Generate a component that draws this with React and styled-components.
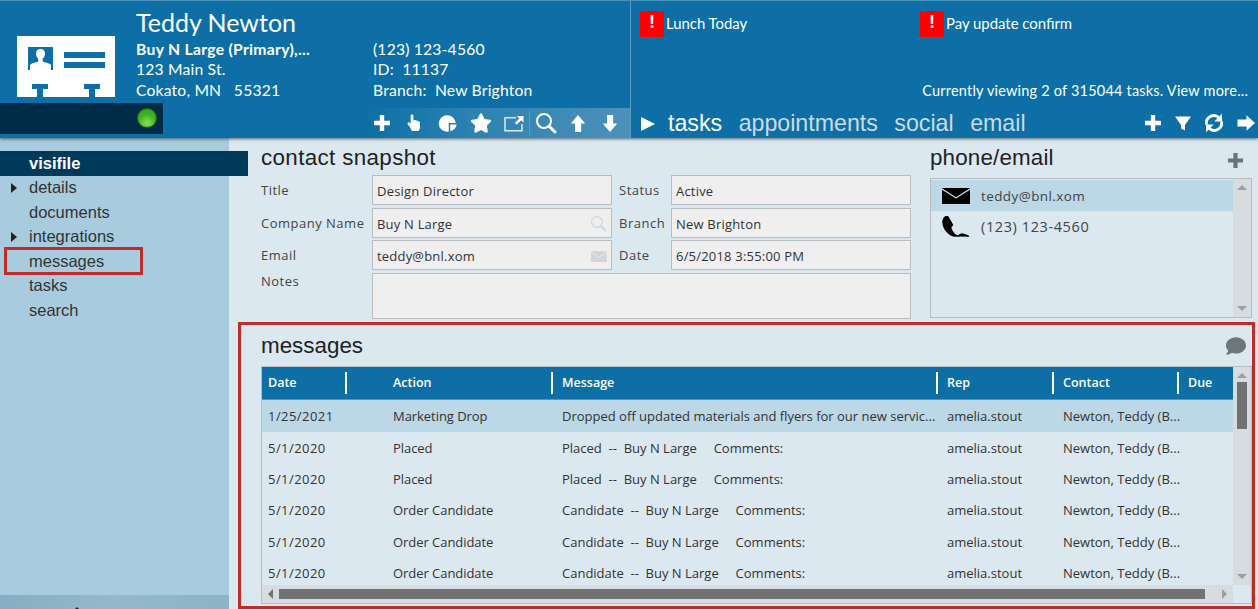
import React from 'react';
import styled, { createGlobalStyle } from 'styled-components';
import { FaStar, FaComment } from 'react-icons/fa';

const Global = createGlobalStyle`
  html, body { margin: 0; padding: 0; width: 1258px; height: 609px; overflow: hidden; background: #dbe8f0; }
  body { font-family: "Open Sans", "Liberation Sans", sans-serif; font-size: 13px; color: #333; }
  * { box-sizing: border-box; }
`;

const Page = styled.div`display: flex; flex-direction: column; width: 1258px; height: 609px; overflow: hidden;`;
const Header = styled.header`
  display: flex; height: 138px; flex: none; background: #0d6fa5; border-top: 1px solid #4a93bd;
  box-shadow: 0 1px 3px rgba(40,60,70,.75); color: #fff; position: relative; z-index: 3;
`;
const ContactHead = styled.div`display: flex; flex-direction: column; width: 631px; flex: none; border-right: 1px solid #5c9cc2;`;
const ContactTop = styled.div`display: flex; height: 102px; flex: none;`;
const LogoCell = styled.div`width: 136px; flex: none; padding: 35px 0 0 17px;`;
const ContactInfo = styled.div`flex: 1; padding-top: 6px;`;
const Name = styled.div`font-family: "Lato", sans-serif; font-size: 25px; line-height: 31px; height: 31.5px; color: #fff;`;
const InfoGrid = styled.div`display: grid; grid-template-columns: 237px 1fr; grid-auto-rows: 20.7px; font-size: 15.7px; line-height: 20.7px; font-family: "Lato", sans-serif; letter-spacing: .18px;`;
const Strong = styled.span`font-weight: 700; letter-spacing: .3px;`;
const ContactBottom = styled.div`display: flex; justify-content: space-between; align-items: flex-end; height: 35px; flex: none;`;
const StatusBar = styled.div`width: 163px; height: 31px; align-self: flex-start; background: #002c47; padding: 5px 0 0 137px;`;
const Led = styled.span`
  display: block; width: 20px; height: 20px; border-radius: 50%;
  background: radial-gradient(circle at 50% 78%, #8be05c 0, #3fb522 50%, #2e9a18 100%);
  border: 1px solid #1d6a12;
`;
const ContactTools = styled.div`
  display: flex; align-items: center; width: 265px; height: 30px;
  background: linear-gradient(90deg, #0d6fa5 0, #2c82b1 40%, #4d91b9 100%);
`;
const ToolSlot = styled.span`display: flex; width: ${p => p.$w || 32}px; height: 24px; align-items: center; justify-content: center; flex: none;`;
const ToolDivider = styled.span`width: 1px; height: 24px; margin-left: -1px; background: #5c9cc2; flex: none;`;

const TaskHead = styled.div`flex: 1; display: flex; flex-direction: column; padding-left: 9px; min-width: 0;`;
const Alerts = styled.div`display: flex; padding-top: 10px; height: 80px; flex: none;`;
const Alert = styled.div`display: flex; width: 280px; height: 26px; align-items: flex-start; gap: 2px; font-family: "Lato", sans-serif; font-size: 14.9px; line-height: 25px;`;
const Bang = styled.span`display: flex; width: 24px; height: 26px; background: #f00; color: #fff; font: 700 18px/22px "Liberation Sans", sans-serif; align-items: flex-start; justify-content: center; flex: none;`;
const Viewing = styled.div`height: 22px; padding-right: 10px; text-align: right; font-family: "Lato", sans-serif; font-size: 14.5px; line-height: 20px; letter-spacing: .2px;`;
const TabRow = styled.div`display: flex; align-items: center; height: 36px; flex: none; padding-top: 6px;`;
const TabArrow = styled.svg`width: 14px; height: 16px; flex: none; margin: 1px 13px 0 1px;`;
const Tab = styled.span`
  font-family: "Liberation Sans", sans-serif; font-size: 23.2px; margin-right: 16.500px;
  color: ${p => (p.$active ? '#fff' : '#cbdae3')};
`;
const TaskTools = styled.div`display: flex; margin-left: auto; align-items: center; gap: 13px; padding-right: 3px;`;
const TaskTool = styled.span`display: flex; align-items: center; justify-content: center;`;

const Body = styled.div`display: flex; flex: 1; min-height: 0;`;
const Sidebar = styled.nav`
  width: 229px; flex: none; display: flex; flex-direction: column; padding-top: 13px;
  background: #a8cbde; position: relative; z-index: 2;
`;
const NavItem = styled.div`
  display: flex; align-items: center; height: 24.5px; flex: none; padding-left: 29px;
  font-family: "Liberation Sans", sans-serif; font-size: 16.5px; color: #333; position: relative;
  ${p => p.$active && 'width: 248px; background: #003a5b; color: #fff; font-weight: 700;'}
  ${p => p.$boxed && 'width: 139px; height: 28px; margin: -2px 0 -1.5px 4px; border: 3px solid #c02b2b; padding-left: 22px;'}
`;
const Caret = styled.span`
  position: absolute; left: 11px; top: 7px; width: 0; height: 0;
  border-left: 6px solid #222; border-top: 5px solid transparent; border-bottom: 5px solid transparent;
`;
const SidebarFoot = styled.div`margin-top: auto; height: 14px; position: relative; background: linear-gradient(100deg, #86adc3, #94b9cd 50%, #8cb3c8);`;
const FootPeek = styled.span`
  position: absolute; left: 75px; bottom: 0; width: 0; height: 0;
  border-left: 2.500px solid transparent; border-right: 2.500px solid transparent; border-bottom: 2px solid #223;
`;

const Content = styled.main`flex: 1; display: flex; flex-direction: column; min-width: 0;`;
const Snapshot = styled.div`display: flex; height: 184px; flex: none; padding: 8px 6px 0 32px; gap: 19px;`;
const SnapshotMain = styled.section`width: 650px; flex: none;`;
const Heading = styled.h2`
  margin: 0; font: 400 22.4px/24px "Liberation Sans", sans-serif; color: #222; height: 24px;
  letter-spacing: ${p => p.$track || 0}px;
`;
const FormGrid = styled.div`
  display: grid; grid-template-columns: 111px 240px 59px 240px; grid-template-rows: 30px 30px 30px 46px;
  gap: 2.670px 0; margin-top: 5px;
`;
const Label = styled.label`
  font-size: 13px; color: #444; padding-top: 6px; letter-spacing: .5px; white-space: nowrap;
  ${p => p.$pad && 'padding-left: 7px;'}
  ${p => p.$raised && 'margin-top: -7px;'}
`;
const Field = styled.div`
  display: flex; align-items: center; justify-content: space-between; background: #efefef; border: 1px solid #b9bdc0;
  padding: 2px 4px 0; font-size: 13px; color: #333; letter-spacing: .2px; ${p => p.$wide && 'grid-column: span 3;'}
`;

const PhonePanel = styled.section`flex: 1; min-width: 0;`;
const HeadingRow = styled.div`display: flex; justify-content: space-between; align-items: center; height: 24px; padding-right: 8px;`;
const AddIcon = styled.span`display: flex; margin-top: 5px;`;
const PhoneList = styled.div`display: flex; height: 140px; margin-top: 8px; border: 1px solid #b9bdc0; background: #dbe8f0;`;
const PhoneRows = styled.div`flex: 1; padding-top: 1px;`;
const PhoneRow = styled.div`
  display: flex; align-items: center; height: 31px; gap: 11px; padding-left: 11px; color: #444;
  font-size: ${p => (p.$selected ? '13.5px' : '14.5px')};
  letter-spacing: ${p => (p.$selected ? '.4px' : '.6px')};
  ${p => p.$selected && 'background: #bcd7e6;'}
`;
const VScroll = styled.div`
  width: 18px; flex: none; background: #d6dce0; display: flex; flex-direction: column; align-items: center; justify-content: space-between; padding: 6px 0 6px;
`;
const UpTri = styled.span`width: 0; height: 0; border-left: 5px solid transparent; border-right: 5px solid transparent; border-bottom: 5px solid #9a9fa3;`;
const DownTri = styled.span`width: 0; height: 0; border-left: 5px solid transparent; border-right: 5px solid transparent; border-top: 5px solid #9a9fa3;`;

const Messages = styled.section`
  height: 287px; flex: none; margin: 0 3px 0 9px; border: 3px solid #c02b2b; padding: 9px 0 0 20px;
  display: flex; flex-direction: column;
`;
const MessagesHead = styled.div`display: flex; justify-content: space-between; align-items: center; height: 24px; padding-right: 6px; flex: none;`;
const Grid = styled.div`
  margin-top: 8px; display: grid; grid-template-columns: 1fr 18px; grid-template-rows: 1fr 18px;
  flex: 1; min-height: 0; border: 1px solid #b9bdc0; margin-bottom: 2px;
`;
const TableWrap = styled.div`min-width: 0; min-height: 0; overflow: hidden;`;
const cols = '83px 38px 168px 385px 116px 125px 57px';
const HeaderRow = styled.div`
  display: grid; grid-template-columns: ${cols}; height: 33px; background: #0d6fa5; border-bottom: 1px solid #5b93b5; align-items: center; color: #fff;
`;
const HeadCell = styled.div`
  font-weight: 600; font-size: 12.500px; height: 22px; line-height: 22px; padding-left: ${p => (p.$first ? '6px' : p.$sep ? '9px' : '10px')};
  ${p => p.$sep && 'border-left: 2px solid #fff;'}
`;
const Row = styled.div`
  display: grid; grid-template-columns: ${cols}; height: ${p => (p.$selected ? '32px' : '31.3px')}; align-items: center; font-size: 13px; color: #333;
  ${p => p.$selected && 'background: #bcd7e6;'}
`;
const DateCell = styled.div`padding-left: 6px; white-space: nowrap; letter-spacing: .45px;`;
const ActionCell = styled.div`padding-left: 10px; white-space: nowrap; letter-spacing: -.05px;`;
const Cell = styled.div`padding-left: 11px; white-space: nowrap;`;
const Spacer = styled.div``;
const Thumb = styled.div`width: 10px; height: 47px; margin-top: 4px; margin-bottom: auto; background: #707274;`;
const HScroll = styled.div`display: flex; align-items: center; background: #d6dce0; padding: 0 6px; gap: 6px;`;
const LeftTri = styled.span`width: 0; height: 0; border-top: 5px solid transparent; border-bottom: 5px solid transparent; border-right: 5px solid #707274;`;
const RightTri = styled.span`width: 0; height: 0; border-top: 5px solid transparent; border-bottom: 5px solid transparent; border-left: 5px solid #9a9fa3;`;
const HThumb = styled.div`flex: 1; height: 10px; background: #707274; margin-right: 11px;`;
const Corner = styled.div`background: #dbe8f0;`;

const Plus = ({ size = 18, color = '#fff' }) => (
  <svg width={size} height={size} viewBox="0 0 18 18"><path fill={color} d="M6.800 1h4.400v5.800H17v4.400h-5.800V17H6.800v-5.800H1V6.800h5.800z" /></svg>
);
const Hand = () => (
  <svg width="15" height="18" viewBox="0 0 15 18"><path fill="#fff" d="M5 .5c.9 0 1.400.6 1.400 1.400v4.400l1.200-.2 1.300.2 1.300.4 1.500.6c1 .5 1.300 1 1.300 2v4.400l-1.200 3.300H4.800L3.600 14 .9 10.500c-.7-1-.4-1.700.3-2 .7-.4 1.400 0 2 .7l.5.5V1.900C3.700 1.100 4.200.5 5 .5z" /></svg>
);
const Pie = () => (
  <svg width="19" height="19" viewBox="0 0 18 18"><path fill="#fff" d="M8.500 1.200a7.800 7.800 0 0 0 0 15.600c.8 0 1.600-.1 1.700-.4V8.600h6.600C16.300 4.500 12.800 1.200 8.500 1.200z" /><path fill="#fff" d="M11.600 10h6c-.3 3-2.600 5.600-6 6.400z" /></svg>
);
const Launch = () => (
  <svg width="20" height="17" viewBox="0 0 20 17" fill="none"><path stroke="#dbe9f2" strokeWidth="1.500" d="M12 2.800H1v13h17V9" /><path fill="#fff" d="M13 1h6.500v6.500L17.200 5.200l-4.600 4.600-1.800-1.800 4.600-4.600z" /></svg>
);
const Lens = ({ size = 22, color = '#fff', w = 2 }) => (
  <svg width={size} height={size} viewBox="0 0 22 22" fill="none"><circle cx="9" cy="9" r="7" stroke={color} strokeWidth={w} /><path stroke={color} strokeWidth={w + 1} strokeLinecap="round" d="M14.200 14.200l5.800 5.800" /></svg>
);
const Up = () => (
  <svg width="16" height="19" viewBox="0 0 14 18"><path fill="#fff" d="M7 1l6.800 8H10v8H4.200V9H.2z" /></svg>
);
const Down = () => (
  <svg width="16" height="19" viewBox="0 0 14 18"><path fill="#fff" d="M7 17l6.800-8H10V1H4.200v8H.2z" /></svg>
);
const Funnel = () => (
  <svg width="16" height="15" viewBox="0 0 16 15"><path fill="#fff" d="M0 .5h16L10 9v5.500l-4-2V9z" /></svg>
);
const Refresh = () => (
  <svg width="20" height="20" viewBox="0 0 20 20" fill="none"><path stroke="#fff" strokeWidth="2.800" d="M2.500 11.500a7.500 7.500 0 0 1 12.500-6.800" /><path stroke="#fff" strokeWidth="2.800" d="M17.500 8.500a7.500 7.500 0 0 1-12.500 6.800" /><path fill="#fff" d="M18 .8v7.700h-7.700zM2 19.200v-7.700h7.700z" /></svg>
);
const Next = () => (
  <svg width="18" height="16" viewBox="0 0 18 16"><path fill="#fff" d="M18 8L9.500.3v4.200H.5v7h9v4.200z" /></svg>
);
const Mail = ({ size = 28, h = 16, fill = '#000', line = '#dbe8f0' }) => (
  <svg width={size} height={h} viewBox="0 0 28 17" preserveAspectRatio="none"><rect width="28" height="17" fill={fill} /><path fill="none" stroke={line} strokeWidth="1.300" d="M0 1l14 9.500L28 1" /></svg>
);
const Phone = () => (
  <svg width="28" height="21" viewBox="0 0 28 21"><path fill="#000" d="M3.500 0C1.500 1 .3 3 .3 6c0 4 2 9 7.500 13 3 2 7 2 11 1.500l8.500.3c0-1-1-1.800-2.500-2-2-1-3.500-1-5-1.500-1.500.5-2.500 1-3.500 2-2.500 0-5.500-3-7-7.500l2-3C10 7 8 2.500 6.500.5 5.500-.2 4.500-.3 3.500 0z" /></svg>
);
const Logo = () => (
  <svg width="98" height="61" viewBox="0 0 98 61">
    <rect width="98" height="61" fill="#fff" />
    <path fill="#0d6fa5" d="M15 48h16v5h-5v8h-6v-8h-5zM67 48h16v5h-5v8h-6v-8h-5z" />
    <rect x="11" y="11" width="25" height="23" fill="#0d6fa5" />
    <path fill="#fff" d="M23.500 13c3 0 4.500 2 4.500 4.500 0 2.300-1 4.300-2.300 5.300v2.700c2.300 1.200 6.800 1.500 8.300 3.500v5H13v-5c1.500-2 6-2.300 8.300-3.500v-2.700c-1.300-1-2.300-3-2.300-5.300 0-2.500 1.500-4.500 4.500-4.500z" />
    <rect x="47" y="16" width="41" height="6" fill="#0d6fa5" />
    <rect x="47" y="26" width="41" height="6" fill="#0d6fa5" />
  </svg>
);

const rows = [
  ['1/25/2021', 'Marketing Drop', 'Dropped off updated materials and flyers for our new servic...', true],
  ['5/1/2020', 'Placed', 'Placed  --  Buy N Large     Comments:'],
  ['5/1/2020', 'Placed', 'Placed  --  Buy N Large     Comments:'],
  ['5/1/2020', 'Order Candidate', 'Candidate  --  Buy N Large     Comments:'],
  ['5/1/2020', 'Order Candidate', 'Candidate  --  Buy N Large     Comments:'],
  ['5/1/2020', 'Order Candidate', 'Candidate  --  Buy N Large     Comments:'],
];
const Pre = styled.span`white-space: pre;`;

export default function App() {
  return (
    <Page>
      <Global />
      <Header>
        <ContactHead>
          <ContactTop>
            <LogoCell><Logo /></LogoCell>
            <ContactInfo>
              <Name>Teddy Newton</Name>
              <InfoGrid>
                <Strong>Buy N Large (Primary),...</Strong><span>(123) 123-4560</span>
                <span>123 Main St.</span><Pre>ID:  11137</Pre>
                <Pre>Cokato, MN   55321</Pre><Pre>Branch:  New Brighton</Pre>
              </InfoGrid>
            </ContactInfo>
          </ContactTop>
          <ContactBottom>
            <StatusBar><Led /></StatusBar>
            <ContactTools>
              <ToolSlot $w={33}><Plus /></ToolSlot>
              <ToolSlot $w={33}><Hand /></ToolSlot>
              <ToolSlot $w={33}><Pie /></ToolSlot>
              <ToolSlot $w={33}><FaStar size={22} color="#fff" /></ToolSlot>
              <ToolSlot $w={33}><Launch /></ToolSlot>
              <ToolDivider />
              <ToolSlot><Lens /></ToolSlot>
              <ToolSlot><Up /></ToolSlot>
              <ToolSlot><Down /></ToolSlot>
            </ContactTools>
          </ContactBottom>
        </ContactHead>
        <TaskHead>
          <Alerts>
            <Alert><Bang>!</Bang>Lunch Today</Alert>
            <Alert><Bang>!</Bang>Pay update confirm</Alert>
          </Alerts>
          <Viewing>Currently viewing 2 of 315044 tasks. View more...</Viewing>
          <TabRow>
            <TabArrow viewBox="0 0 14 16"><path fill="#fff" d="M0 1l14 7-14 7z" /></TabArrow>
            <Tab $active>tasks</Tab>
            <Tab>appointments</Tab>
            <Tab>social</Tab>
            <Tab>email</Tab>
            <TaskTools>
              <TaskTool><Plus /></TaskTool>
              <TaskTool><Funnel /></TaskTool>
              <TaskTool><Refresh /></TaskTool>
              <TaskTool><Next /></TaskTool>
            </TaskTools>
          </TabRow>
        </TaskHead>
      </Header>
      <Body>
        <Sidebar>
          <NavItem $active>visifile</NavItem>
          <NavItem><Caret />details</NavItem>
          <NavItem>documents</NavItem>
          <NavItem><Caret />integrations</NavItem>
          <NavItem $boxed>messages</NavItem>
          <NavItem>tasks</NavItem>
          <NavItem>search</NavItem>
          <SidebarFoot><FootPeek /></SidebarFoot>
        </Sidebar>
        <Content>
          <Snapshot>
            <SnapshotMain>
              <Heading $track={0.35}>contact snapshot</Heading>
              <FormGrid>
                <Label>Title</Label><Field>Design Director</Field>
                <Label $pad>Status</Label><Field>Active</Field>
                <Label>Company Name</Label><Field>Buy N Large<Lens size={17} color="#d3d6d8" w={1.5} /></Field>
                <Label $pad>Branch</Label><Field>New Brighton</Field>
                <Label>Email</Label><Field>teddy@bnl.xom<Mail size={16} h={11} fill="#d3d6d8" line="#efefef" /></Field>
                <Label $pad>Date</Label><Field>6/5/2018 3:55:00 PM</Field>
                <Label $raised>Notes</Label><Field $wide />
              </FormGrid>
            </SnapshotMain>
            <PhonePanel>
              <HeadingRow>
                <Heading $track={0.15}>phone/email</Heading>
                <AddIcon><Plus size={17} color="#6b7278" /></AddIcon>
              </HeadingRow>
              <PhoneList>
                <PhoneRows>
                  <PhoneRow $selected><Mail />teddy@bnl.xom</PhoneRow>
                  <PhoneRow><Phone />(123) 123-4560</PhoneRow>
                </PhoneRows>
                <VScroll><UpTri /><DownTri /></VScroll>
              </PhoneList>
            </PhonePanel>
          </Snapshot>
          <Messages>
            <MessagesHead>
              <Heading>messages</Heading>
              <FaComment size={20} color="#6f7679" />
            </MessagesHead>
            <Grid>
              <TableWrap>
                <HeaderRow>
                  <HeadCell $first>Date</HeadCell>
                  <HeadCell $sep />
                  <HeadCell>Action</HeadCell>
                  <HeadCell $sep>Message</HeadCell>
                  <HeadCell $sep>Rep</HeadCell>
                  <HeadCell $sep>Contact</HeadCell>
                  <HeadCell $sep>Due</HeadCell>
                </HeaderRow>
                {rows.map((r, i) => (
                  <Row key={i} $selected={r[3]}>
                    <DateCell>{r[0]}</DateCell>
                    <Spacer />
                    <ActionCell>{r[1]}</ActionCell>
                    <Cell><Pre>{r[2]}</Pre></Cell>
                    <Cell>amelia.stout</Cell>
                    <Cell>Newton, Teddy (B...</Cell>
                    <Spacer />
                  </Row>
                ))}
              </TableWrap>
              <VScroll><UpTri /><Thumb /><DownTri /></VScroll>
              <HScroll><LeftTri /><HThumb /><RightTri /></HScroll>
              <Corner />
            </Grid>
          </Messages>
        </Content>
      </Body>
    </Page>
  );
}
